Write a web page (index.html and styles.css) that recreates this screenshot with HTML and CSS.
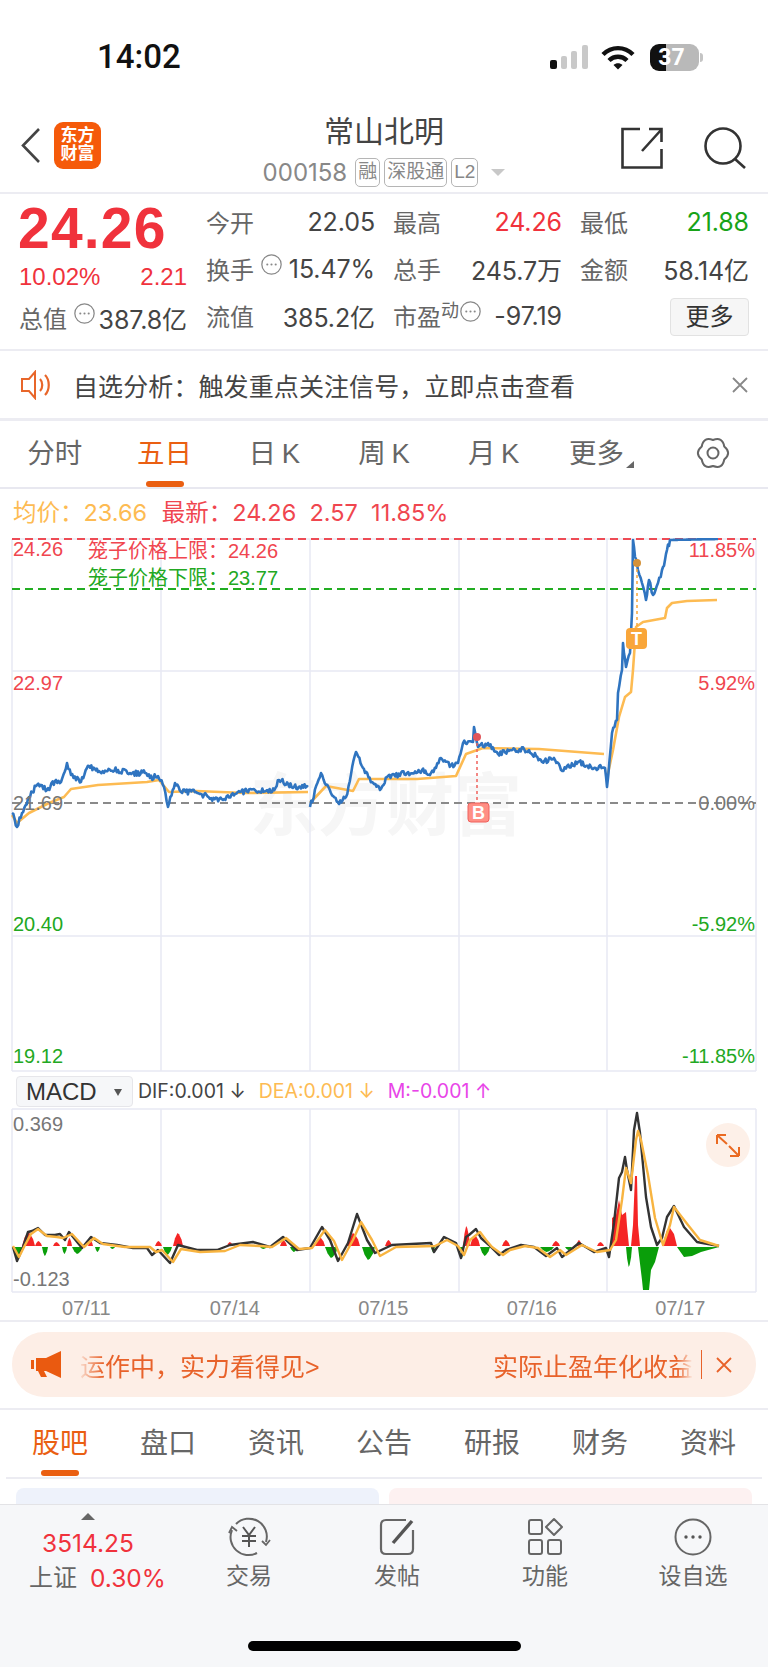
FILE: index.html
```html
<!DOCTYPE html>
<html lang="zh-CN">
<head>
    <meta charset="UTF-8">
    <title>常山北明</title>
    <link rel="stylesheet" href="styles.css">
</head>
<body>
    <div class="status-bar">
        <span class="time">14:02</span>
        <div class="status-icons">
            <svg class="signal" width="40" height="24" viewBox="0 0 40 24">
                <rect x="1" y="15" width="7" height="9" rx="2" fill="#111"/>
                <rect x="12" y="11" width="6" height="13" rx="2" fill="#c9c9c9"/>
                <rect x="22" y="6" width="6" height="18" rx="2" fill="#c9c9c9"/>
                <rect x="33" y="0" width="6" height="24" rx="2" fill="#c9c9c9"/>
            </svg>
            <svg class="wifi" width="34" height="25" viewBox="0 0 34 25">
                <path d="M2 9.5C10.5 1 23.5 1 32 9.5" fill="none" stroke="#111" stroke-width="4.4"/>
                <path d="M8 15.5C13 10.5 21 10.5 26 15.5" fill="none" stroke="#111" stroke-width="4.4"/>
                <path d="M12.5 20 17 24.6 21.5 20C19 17.6 15 17.6 12.5 20Z" fill="#111"/>
            </svg>
            <div class="battery"><span>37</span></div>
            <div class="battery-nub"></div>
        </div>
    </div>

    <div class="nav">
        <div class="nav-left">
            <svg width="20" height="36" viewBox="0 0 20 36"><path d="M18 2 2 18.5 18 35" fill="none" stroke="#444" stroke-width="2.6"/></svg>
            <div class="logo">东方<br>财富</div>
        </div>
        <div class="nav-title">
            <div class="stock-name">常山北明</div>
            <div class="stock-code">
                <span class="code">000158</span>
                <span class="tag">融</span>
                <span class="tag">深股通</span>
                <span class="tag">L2</span>
                <span class="code-caret"></span>
            </div>
        </div>
        <div class="nav-right">
            <svg width="42" height="42" viewBox="0 0 42 42"><path d="M19 2H1.5V40.500H40.500V22M21 24 40 3M28 2H40.500V15" fill="none" stroke="#333" stroke-width="2.6"/></svg>
            <svg width="42" height="42" viewBox="0 0 42 42"><circle cx="19" cy="19" r="17.500" fill="none" stroke="#333" stroke-width="2.6"/><path d="M31 32 41 41" fill="none" stroke="#333" stroke-width="2.6"/></svg>
        </div>
    </div>

    <div class="quote">
        <div class="price-box">
            <div class="price">24.26</div>
            <div class="price-change"><span>10.02%</span><span>2.21</span></div>
            <div class="cell">
                <span class="label">总值</span>
                <svg class="dots" viewBox="0 0 20 20"><use href="#dots-icon"/></svg>
                <span class="value">387.8亿</span>
            </div>
        </div>
        <div class="quote-grid">
            <div class="cell"><span class="label">今开</span><span class="value">22.05</span></div>
            <div class="cell"><span class="label">最高</span><span class="value up">24.26</span></div>
            <div class="cell"><span class="label">最低</span><span class="value down">21.88</span></div>
            <div class="cell">
                <span class="label">换手</span>
                <svg class="dots" viewBox="0 0 20 20"><use href="#dots-icon"/></svg>
                <span class="value">15.47%</span>
            </div>
            <div class="cell"><span class="label">总手</span><span class="value">245.7万</span></div>
            <div class="cell"><span class="label">金额</span><span class="value">58.14亿</span></div>
            <div class="cell"><span class="label">流值</span><span class="value">385.2亿</span></div>
            <div class="cell">
                <span class="label">市盈</span>
                <span class="label-sup">动</span>
                <svg class="dots" viewBox="0 0 20 20"><use href="#dots-icon"/></svg>
                <span class="value">-97.19</span>
            </div>
            <div class="cell cell-end"><button class="more-btn">更多</button></div>
        </div>
    </div>

    <svg class="defs" width="0" height="0">
        <symbol id="dots-icon" viewBox="0 0 20 20">
            <circle cx="10" cy="10" r="9.200" fill="none" stroke="#888" stroke-width="1.200"/>
            <circle cx="6" cy="10" r="1" fill="#888"/><circle cx="10" cy="10" r="1" fill="#888"/><circle cx="14" cy="10" r="1" fill="#888"/>
        </symbol>
    </svg>

    <div class="alert">
        <svg width="34" height="30" viewBox="0 0 34 30">
            <path d="M2 9H9L15 2V28L9 21H2Z" fill="none" stroke="#e8662a" stroke-width="2"/>
            <path d="M20 9C23 12 23 18 20 21M25 5C30 10 30 20 25 25" fill="none" stroke="#e8662a" stroke-width="2.200"/>
        </svg>
        <span class="alert-text">自选分析：触发重点关注信号，立即点击查看</span>
        <svg class="alert-close" width="18" height="18" viewBox="0 0 18 18"><path d="M2 2 16 16M16 2 2 16" stroke="#888" stroke-width="1.800"/></svg>
    </div>

    <div class="period-tabs">
        <div class="period">分时</div>
        <div class="period active">五日</div>
        <div class="period">日 K</div>
        <div class="period">周 K</div>
        <div class="period">月 K</div>
        <div class="period period-more">更多<i class="corner"></i></div>
        <div class="period">
            <svg width="34" height="32" viewBox="0 0 34 32">
                <path d="M28.26 9.5Q36 16 28.26 22.5Q26.5 32.45 17 29Q7.5 32.45 5.74 22.5Q-2 16 5.74 9.5Q7.5-.45 17 3Q26.5-.45 28.26 9.5Z" fill="none" stroke="#666" stroke-width="2"/>
                <circle cx="17" cy="16" r="5.500" fill="none" stroke="#666" stroke-width="2"/>
            </svg>
        </div>
    </div>

    <div class="price-info">
        <span class="avg">均价：23.66</span>
        <span class="latest">最新：24.26&nbsp;&nbsp;2.57&nbsp;&nbsp;11.85%</span>
    </div>

    <svg class="chart" id="priceChart" width="768" height="534" viewBox="0 538 768 534">
        <text class="watermark" x="250" y="830">东方财富</text>
        <g class="grid">
            <path d="M12 539H756M12 671H756M12 936H756M12 1071H756"/>
            <path d="M12 539V1071M161 539V1071M310 539V1071M459 539V1071M607 539V1071M756 539V1071"/>
        </g>
        <path class="dash dash-red" d="M12 539H756"/>
        <path class="dash dash-green" d="M12 589H756"/>
        <path class="dash dash-gray" d="M12 803H756"/>
        <g id="avgLines" class="line-avg"></g>
        <g id="priceLines" class="line-price"></g>
        <path class="marker-line red" d="M477 737V802"/>
        <path class="marker-line orange" d="M637 563V628"/>
        <circle cx="477" cy="737" r="4" fill="#e0555a"/>
        <circle cx="637" cy="563" r="4" fill="#d4923a"/>
        <rect x="468" y="803" width="21" height="19" rx="3" fill="#ff8f85" stroke="#f0615c"/>
        <text class="badge" x="478.500" y="819">B</text>
        <rect x="626" y="628" width="21" height="21" rx="4" fill="#f9a63a"/>
        <text class="badge" x="636.500" y="645">T</text>

        <text class="lbl red" x="13" y="556">24.26</text>
        <text class="lbl-cn red" x="88" y="558">笼子价格上限：24.26</text>
        <text class="lbl-cn green" x="88" y="585">笼子价格下限：23.77</text>
        <text class="lbl red" x="13" y="690">22.97</text>
        <text class="lbl gray" x="13" y="810">21.69</text>
        <text class="lbl green" x="13" y="931">20.40</text>
        <text class="lbl green" x="13" y="1063">19.12</text>
        <text class="lbl end red" x="755" y="557">11.85%</text>
        <text class="lbl end red" x="755" y="690">5.92%</text>
        <text class="lbl end gray" x="755" y="810">0.00%</text>
        <text class="lbl end green" x="755" y="931">-5.92%</text>
        <text class="lbl end green" x="755" y="1063">-11.85%</text>
    </svg>

    <div class="macd-head">
        <div class="macd-select"><span>MACD</span><i class="caret"></i></div>
        <span class="macd-val dif">DIF:0.001 ↓</span>
        <span class="macd-val dea">DEA:0.001 ↓</span>
        <span class="macd-val mm">M:-0.001 ↑</span>
    </div>

    <svg class="chart" id="macdChart" width="768" height="185" viewBox="0 1108 768 185">
        <g class="grid">
            <path d="M12 1109H756M12 1292H756"/>
            <path d="M12 1109V1292M161 1109V1292M310 1109V1292M459 1109V1292M607 1109V1292M756 1109V1292"/>
        </g>
        <g id="macdBars"></g>
        <g id="macdLines"></g>
        <text class="lbl gray" x="13" y="1131">0.369</text>
        <text class="lbl gray" x="13" y="1286">-0.123</text>
        <circle cx="728" cy="1145" r="22" fill="#fdf0e8"/>
        <path class="expand" d="M717 1135V1144M717 1135H726M717 1135 727 1144M739 1156V1147M739 1156H730M739 1156 729 1146"/>
    </svg>

    <div class="dates">
        <span>07/11</span><span>07/14</span><span>07/15</span><span>07/16</span><span>07/17</span>
    </div>

    <div class="banner-wrap">
        <div class="banner">
            <svg width="31" height="27" viewBox="0 0 31 27">
                <path d="M0 9H3V18H0ZM5 7H15L30 0V27L15 20H13L16 26H10L7 20H5Z" fill="#ea5a10"/>
            </svg>
            <div class="marquee">
                <span>运作中，实力看得见&gt;</span>
                <span>实际止盈年化收益</span>
            </div>
            <i class="banner-sep"></i>
            <svg width="16" height="16" viewBox="0 0 16 16"><path d="M1 1 15 15M15 1 1 15" stroke="#e8622a" stroke-width="1.800"/></svg>
        </div>
    </div>

    <div class="info-tabs">
        <div class="info-tab active">股吧</div>
        <div class="info-tab">盘口</div>
        <div class="info-tab">资讯</div>
        <div class="info-tab">公告</div>
        <div class="info-tab">研报</div>
        <div class="info-tab">财务</div>
        <div class="info-tab">资料</div>
    </div>

    <div class="peek-cards">
        <div class="peek blue"></div>
        <div class="peek pink"></div>
    </div>

    <div class="bottom-bar">
        <div class="index">
            <i class="index-arrow"></i>
            <div class="index-value">3514.25</div>
            <div class="index-name"><span>上证</span><span class="index-pct">0.30%</span></div>
        </div>
        <div class="bar-item">
            <svg width="44" height="40" viewBox="0 0 44 40">
                <path d="M9 7A18 18 0 0 1 39 25M5 13A18 18 0 0 0 30 36" fill="none" stroke="#666" stroke-width="2"/>
                <path d="M2 16 5 10 10 14M35 24 39 28 43 23" fill="none" stroke="#666" stroke-width="1.800"/>
                <path d="M16 10 22 18 28 10M22 18V30M15 19H29M15 24H29" fill="none" stroke="#555" stroke-width="2"/>
            </svg>
            <span>交易</span>
        </div>
        <div class="bar-item">
            <svg width="36" height="38" viewBox="0 0 36 38">
                <path d="M27 2H7C4 2 2 4 2 7V31C2 34 4 36 7 36H29C32 36 34 34 34 31V12" fill="none" stroke="#666" stroke-width="2.200"/>
                <path d="M14 25 33 3" fill="none" stroke="#555" stroke-width="3.400"/>
            </svg>
            <span>发帖</span>
        </div>
        <div class="bar-item">
            <svg width="36" height="38" viewBox="0 0 36 38">
                <rect x="2" y="2" width="13" height="14" rx="2" fill="none" stroke="#666" stroke-width="2"/>
                <path d="M27 1 35 9 27 17 19 9Z" fill="none" stroke="#666" stroke-width="2" stroke-linejoin="round"/>
                <rect x="2" y="22" width="13" height="14" rx="2" fill="none" stroke="#666" stroke-width="2"/>
                <rect x="21" y="22" width="13" height="14" rx="2" fill="none" stroke="#666" stroke-width="2"/>
            </svg>
            <span>功能</span>
        </div>
        <div class="bar-item">
            <svg width="38" height="38" viewBox="0 0 38 38">
                <circle cx="19" cy="19" r="17.500" fill="none" stroke="#666" stroke-width="2"/>
                <circle cx="12" cy="19" r="1.700" fill="#555"/><circle cx="19" cy="19" r="1.700" fill="#555"/><circle cx="26" cy="19" r="1.700" fill="#555"/>
            </svg>
            <span>设自选</span>
        </div>
        <div class="home-indicator"></div>
    </div>

    <script src="chart.js"></script>
</body>
</html>
```

FILE: styles.css
```css
:root {
    --up: #f0323c;
    --down: #18a318;
    --orange: #ea5f12;
    --label: #666;
    --value: #444;
    --line: #ececf2;
    --grid: #e7e9f4;
    --num-font: Inter, "Noto Sans CJK SC", sans-serif;
}

* {
    box-sizing: border-box;
}

body {
    margin: 0;
    width: 768px;
    height: 1667px;
    overflow: hidden;
    background-color: #fff;
    font-family: "Liberation Sans", "Noto Sans CJK SC", sans-serif;
    color: var(--value);
}

.defs {
    position: absolute;
}

/* Status bar */
.status-bar {
    height: 108px;
    padding: 38px 65px 0 97px;
    display: flex;
    justify-content: space-between;
    align-items: flex-start;
}

.time {
    font-family: Roboto, "Liberation Sans", sans-serif;
    font-size: 33px;
    font-weight: 500;
    line-height: 38px;
    color: #111;
}

.status-icons {
    display: flex;
    align-items: center;
    height: 38px;
}

.wifi {
    margin-left: 12px;
}

.battery {
    margin-left: 15px;
    width: 49px;
    height: 27px;
    border-radius: 9px;
    background: linear-gradient(90deg, #111 0, #111 16px, #b9b9b9 16px);
    color: #fff;
    font-family: Roboto, sans-serif;
    font-size: 23px;
    font-weight: 700;
    line-height: 27px;
    text-align: center;
}

.battery span {
    margin-left: -6px;
}

.battery-nub {
    width: 3px;
    height: 9px;
    margin-left: 1px;
    border-radius: 0 3px 3px 0;
    background-color: #c4c4c4;
}

/* Nav */
.nav {
    height: 86px;
    display: grid;
    grid-template-columns: 1fr auto 1fr;
    border-bottom: 2px solid var(--line);
}

.nav-left {
    display: flex;
    align-items: center;
    gap: 13px;
    padding: 0 0 10px 21px;
}

.logo {
    width: 47px;
    height: 47px;
    border-radius: 9px;
    background-color: #f55a0a;
    color: #fff;
    font-size: 17px;
    font-weight: 700;
    line-height: 18px;
    text-align: center;
    padding-top: 5px;
}

.nav-title {
    text-align: center;
    padding-top: 7px;
}

.stock-name {
    font-size: 30px;
    line-height: 34px;
    color: #444;
}

.stock-code {
    display: flex;
    align-items: center;
    gap: 4px;
    margin-top: 9px;
    height: 29px;
}

.code {
    font-family: var(--num-font);
    font-size: 24px;
    color: #888;
    margin-right: 4px;
}

.tag {
    height: 29px;
    padding: 0 2px;
    border: 1.500px solid #b5b5b5;
    border-radius: 5px;
    font-size: 19px;
    line-height: 26px;
    color: #888;
}

.code-caret {
    margin-left: 9px;
    border-left: 7px solid transparent;
    border-right: 7px solid transparent;
    border-top: 7px solid #c8c8c8;
}

.nav-right {
    display: flex;
    justify-content: flex-end;
    gap: 41px;
    padding: 19px 22px 0 0;
}

/* Quote */
.quote {
    height: 157px;
    padding-left: 19px;
    display: flex;
    border-bottom: 2px solid var(--line);
}

.price-box {
    width: 168px;
}

.price {
    margin-top: 3px;
    margin-left: -1px;
    font-size: 57px;
    font-weight: 700;
    line-height: 62px;
    letter-spacing: 1.200px;
    color: var(--up);
}

.price-change {
    margin-top: 3px;
    display: flex;
    justify-content: space-between;
    font-size: 24px;
    line-height: 30px;
    color: var(--up);
}

.price-box .cell {
    margin-top: 2px;
    height: 47px;
}

.quote-grid {
    margin-left: 19px;
    padding-top: 4px;
    display: grid;
    grid-template-columns: repeat(3, 169px);
    grid-auto-rows: 47px;
    column-gap: 18px;
}

.cell {
    display: flex;
    align-items: center;
    font-size: 24px;
    white-space: nowrap;
}

.cell-end {
    justify-content: flex-end;
}

.label {
    color: var(--label);
}

.label-sup {
    align-self: flex-start;
    margin-top: 8px;
    font-size: 18px;
    line-height: 22px;
    color: var(--label);
}

.value {
    margin-left: auto;
    font-family: var(--num-font);
    font-size: 25px;
    letter-spacing: -0.100px;
    color: var(--value);
}

.value.up {
    color: var(--up);
}

.value.down {
    color: var(--down);
}

.dots {
    align-self: flex-start;
    width: 21px;
    height: 21px;
    margin: 9px 0 0 7px;
    flex: none;
}

.label-sup + .dots {
    margin-left: 1px;
}

.more-btn {
    width: 79px;
    height: 38px;
    margin-top: 2px;
    border: 1px solid #e2e2e2;
    border-radius: 4px;
    background-color: #f6f6f6;
    font-family: inherit;
    font-size: 24px;
    line-height: 36px;
    padding: 0;
    color: #333;
}

/* Alert */
.alert {
    height: 70px;
    padding: 0 19px 0 20px;
    display: flex;
    align-items: center;
    border-bottom: 3px solid var(--line);
}

.alert-text {
    margin-left: 19px;
    font-size: 25px;
    letter-spacing: 0.100px;
    color: #444;
}

.alert-close {
    margin-left: auto;
}

/* Period tabs */
.period-tabs {
    height: 68px;
    display: grid;
    grid-template-columns: repeat(7, 1fr);
    align-items: center;
    padding-bottom: 2px;
    border-bottom: 2px solid #e8e8f0;
}

.period {
    position: relative;
    font-size: 27.500px;
    line-height: 66px;
    height: 66px;
    color: var(--label);
    text-align: center;
    word-spacing: -2px;
}

.period svg {
    margin-top: 16px;
    display: inline-block;
}

.period.active {
    color: var(--orange);
}

.period.active::after {
    content: "";
    position: absolute;
    left: 36px;
    bottom: 0;
    width: 38px;
    height: 6px;
    border-radius: 3px;
    background-color: var(--orange);
}

.period-more {
    padding-right: 14px;
}

.corner {
    position: absolute;
    right: 24px;
    top: 40px;
    border-left: 8px solid transparent;
    border-bottom: 7px solid #666;
}

.price-info {
    height: 49px;
    padding: 11px 0 0 13px;
    font-family: var(--num-font);
    font-size: 23.500px;
    line-height: 26px;
    white-space: nowrap;
}

.avg {
    color: #fdbb52;
}

.latest {
    margin-left: 8px;
    color: #f0464f;
}

/* Charts */
.chart {
    display: block;
}

.grid path {
    fill: none;
    stroke: var(--grid);
    stroke-width: 1.500;
}

.watermark {
    font-size: 68px;
    font-weight: 700;
    fill: #f6f6f6;
}

.dash {
    fill: none;
    stroke-width: 2;
    stroke-dasharray: 8 5;
}

.dash-red {
    stroke: #ee4b55;
}

.dash-green {
    stroke: #22ad22;
}

.dash-gray {
    stroke: #8a8a8a;
}

.line-price {
    filter: blur(0.300px);
}

.line-price polyline {
    fill: none;
    stroke: #2f74c0;
    stroke-width: 2.600;
    stroke-linejoin: round;
}

.line-avg polyline {
    fill: none;
    stroke: #fdbb52;
    stroke-width: 2.600;
    stroke-linejoin: round;
}

.marker-line {
    fill: none;
    stroke-width: 1.500;
    stroke-dasharray: 3 3;
}

.marker-line.red {
    stroke: #f0615c;
}

.marker-line.orange {
    stroke: #f9a63a;
}

.badge {
    font-size: 18px;
    font-weight: 700;
    fill: #fff;
    text-anchor: middle;
}

.lbl {
    font-size: 20px;
}

.lbl-cn {
    font-size: 20px;
}

.end {
    text-anchor: end;
}

text.red {
    fill: #f0464f;
}

text.green {
    fill: #22a822;
}

text.gray {
    fill: #777;
}

.expand {
    fill: none;
    stroke: #ea6a22;
    stroke-width: 2;
}

.macd-head {
    height: 36px;
    padding: 2px 0 0 16px;
    display: flex;
    align-items: center;
    white-space: nowrap;
}

.macd-select {
    position: relative;
    width: 117px;
    height: 31px;
    padding-left: 9px;
    border: 1px solid #e6e6ea;
    border-radius: 4px;
    background-color: #f6f7f9;
    font-size: 24px;
    line-height: 30px;
    color: #333;
}

.caret {
    position: absolute;
    right: 10px;
    top: 12px;
    border-left: 4.500px solid transparent;
    border-right: 4.500px solid transparent;
    border-top: 7px solid #555;
}

.macd-val {
    font-family: var(--num-font);
    font-size: 19.500px;
}

.dif {
    margin-left: 5px;
    color: #444;
}

.dea {
    margin-left: 13px;
    color: #fdbb52;
}

.mm {
    margin-left: 13px;
    color: #e845e8;
}

.dates {
    height: 29px;
    display: grid;
    grid-template-columns: repeat(5, 148.500px);
    justify-items: center;
    padding-left: 12px;
    font-size: 20px;
    line-height: 30px;
    color: #888;
    border-bottom: 2px solid var(--line);
}

/* Banner */
.banner-wrap {
    height: 88px;
    padding: 10px 12px 0;
    border-bottom: 2px solid var(--line);
}

.banner {
    height: 65px;
    padding: 0 24px 0 19px;
    display: flex;
    align-items: center;
    border-radius: 32px;
    background-color: #fdeee6;
    color: #e8622a;
}

.marquee {
    flex: 1;
    margin-left: 15px;
    padding-left: 3px;
    display: flex;
    justify-content: space-between;
    font-size: 25px;
    white-space: nowrap;
    overflow: hidden;
    -webkit-mask-image: linear-gradient(90deg, transparent 0, #000 26px, #000 calc(100% - 16px), transparent 100%);
    mask-image: linear-gradient(90deg, transparent 0, #000 26px, #000 calc(100% - 16px), transparent 100%);
}

.banner-sep {
    width: 1px;
    height: 29px;
    margin: 0 14px 0 8px;
    background-color: #e8622a;
}

/* Info tabs */
.info-tabs {
    height: 69px;
    margin: 0 6px;
    padding-right: 1px;
    display: grid;
    grid-template-columns: repeat(7, 108px);
    border-bottom: 2px solid var(--line);
}

.info-tab {
    position: relative;
    font-size: 28px;
    line-height: 68px;
    height: 67px;
    text-align: center;
    color: var(--label);
}

.info-tab.active {
    color: var(--orange);
}

.info-tab.active::after {
    content: "";
    position: absolute;
    left: 35px;
    bottom: 1px;
    width: 38px;
    height: 6px;
    border-radius: 3px;
    background-color: var(--orange);
}

.peek-cards {
    height: 25px;
    padding: 9px 16px 0;
    display: grid;
    grid-template-columns: 363px 363px;
    column-gap: 10px;
}

.peek {
    border-radius: 8px 8px 0 0;
}

.peek.blue {
    background-color: #eef2fb;
}

.peek.pink {
    background-color: #fdf1f1;
}

/* Bottom bar */
.bottom-bar {
    position: relative;
    height: 163px;
    padding-left: 1px;
    display: grid;
    grid-template-columns: 174px repeat(4, 148px);
    align-items: start;
    border-top: 1px solid #e3e3e6;
    background-color: #f6f7f9;
}

.index {
    position: relative;
    padding-top: 24px;
}

.index-arrow {
    position: absolute;
    left: 80px;
    top: 8px;
    border-left: 7px solid transparent;
    border-right: 7px solid transparent;
    border-bottom: 7px solid #666;
}

.index-value {
    padding-left: 41px;
    font-family: var(--num-font);
    font-size: 24.500px;
    line-height: 28px;
    color: var(--up);
}

.index-name {
    margin-top: 6px;
    padding-left: 28px;
    display: flex;
    gap: 13px;
    font-size: 24px;
    line-height: 30px;
    color: var(--label);
}

.index-pct {
    font-family: var(--num-font);
    font-size: 24.500px;
    color: var(--up);
}

.bar-item {
    padding-top: 12px;
    display: flex;
    flex-direction: column;
    align-items: center;
    font-size: 23px;
    line-height: 30px;
    color: var(--label);
}

.bar-item svg {
    height: 40px;
    margin-bottom: 4px;
}

.home-indicator {
    position: absolute;
    left: 248px;
    top: 136px;
    width: 273px;
    height: 10px;
    border-radius: 5px;
    background-color: #000;
}
```

FILE: chart.js
```js
// draws the lines of the five day chart and the macd panel
var NS = 'http://www.w3.org/2000/svg';

var pricePts = [
    [[12,813],[17,827],[22,813],[29,797],[37,785],[47,790],[56,780],[61,782],[67,763],[71,775],[81,782],[89,766],[98,772],[118,770],[130,773],[145,773],[150,778],[158,776],[164,787],[168,807],[175,783],[181,792],[196,792],[211,798],[223,800],[240,792],[255,790],[272,792],[279,780],[294,787],[308,787]],
    [[310,807],[321,773],[326,785],[338,802],[346,797],[356,752],[365,773],[380,790],[387,777],[407,773],[422,770],[431,773],[441,758],[451,765],[458,763],[463,743],[473,742],[474,727],[478,747],[488,743],[498,754],[510,750],[529,750],[542,762],[554,758],[561,770],[578,762],[591,767],[605,768],[607,787],[612,733],[617,720],[618,693],[622,670],[623,643],[626,667],[630,653],[632,613],[633,540],[635,557],[638,570],[642,583],[646,600],[649,580],[653,595],[658,583],[662,570],[665,560],[667,550],[670,540],[718,539]]
];

var avgPts = [
    [[12,815],[17,823],[29,813],[49,803],[64,797],[71,789],[98,785],[147,782],[159,780],[169,792],[196,791],[245,793],[308,792]],
    [[310,803],[326,786],[353,791],[359,779],[417,779],[456,776],[466,754],[483,748],[539,749],[604,754]],
    [[607,778],[613,750],[619,717],[625,697],[631,692],[633,670],[636,627],[643,622],[665,618],[667,608],[672,603],[687,601],[717,600]]
];

var difPts = [[13,1247],[17,1261],[23,1247],[28,1232],[32,1231],[38,1228],[45,1235],[55,1235],[60,1234],[65,1240],[69,1232],[82,1248],[91,1237],[100,1243],[117,1245],[133,1248],[147,1248],[152,1255],[158,1250],[170,1263],[178,1245],[197,1250],[217,1250],[230,1245],[253,1242],[270,1247],[283,1237],[297,1250],[310,1248],[322,1227],[330,1240],[338,1261],[348,1243],[357,1214],[367,1240],[375,1253],[392,1245],[431,1243],[434,1252],[444,1237],[456,1243],[461,1258],[466,1237],[469,1235],[476,1229],[481,1238],[489,1245],[499,1255],[506,1250],[521,1245],[534,1247],[546,1256],[557,1248],[562,1257],[579,1243],[594,1252],[606,1248],[609,1257],[614,1223],[619,1178],[622,1172],[625,1157],[627,1170],[631,1190],[634,1130],[637,1113],[640,1133],[646,1197],[651,1227],[657,1245],[662,1238],[667,1217],[674,1206],[684,1227],[697,1242],[719,1246]];

var deaPts = [[13,1246],[19,1257],[25,1245],[31,1234],[38,1229],[47,1236],[57,1237],[63,1238],[72,1234],[84,1247],[94,1238],[103,1244],[125,1247],[150,1247],[156,1252],[162,1250],[173,1262],[181,1249],[200,1252],[225,1251],[240,1245],[260,1246],[272,1247],[286,1238],[299,1249],[312,1248],[325,1230],[334,1241],[342,1260],[353,1240],[361,1222],[372,1240],[380,1256],[396,1247],[435,1246],[447,1240],[458,1246],[464,1255],[470,1240],[480,1232],[486,1240],[492,1247],[503,1255],[510,1250],[525,1246],[538,1248],[550,1257],[560,1250],[566,1255],[582,1245],[597,1252],[610,1250],[616,1240],[622,1200],[626,1168],[631,1183],[636,1140],[638,1131],[641,1140],[648,1175],[655,1218],[663,1245],[670,1225],[674,1207],[688,1225],[700,1240],[719,1246]];

// x0, x1, tip of a histogram bump
var redBars = [[22,35,1232],[35,42,1241],[53,60,1242],[67,72,1238],[88,93,1240],[155,162,1241],[173,183,1233],[227,233,1242],[280,287,1240],[315,325,1237],[347,360,1233],[385,392,1240],[463,470,1226],[470,480,1235],[502,510,1240],[552,560,1241],[576,582,1240],[597,604,1242]];
var greenBars = [[13,22,1260],[42,48,1256],[62,67,1254],[72,83,1254],[95,100,1252],[110,115,1249],[163,172,1255],[260,267,1249],[290,298,1252],[325,338,1258],[362,375,1260],[431,435,1252],[460,464,1258],[480,490,1256],[540,554,1252],[565,572,1250],[626,632,1267]];
var redShapes = [
    '612,1246 612,1218 616,1215 619,1200 622,1215 626,1212 627,1226 629,1246',
    '631,1246 633,1225 635,1176 637,1176 638,1225 640,1246',
    '662,1246 667,1230 670,1228 674,1234 677,1246'
];
var greenShapes = [
    '638,1247 642,1280 643,1290 649,1290 651,1270 655,1262 659,1247',
    '677,1247 684,1257 692,1256 701,1252 719,1247'
];

function addPolyline(parent, pts, attrs) {
    var line = document.createElementNS(NS, 'polyline');
    line.setAttribute('points', pts.map(function (p) { return p[0] + ',' + p[1]; }).join(' '));
    for (var k in attrs) line.setAttribute(k, attrs[k]);
    parent.appendChild(line);
}

function addPolygon(parent, points, fill) {
    var shape = document.createElementNS(NS, 'polygon');
    shape.setAttribute('points', points);
    shape.setAttribute('fill', fill);
    parent.appendChild(shape);
}

// rounded looking bump from the zero line out to the tip
function bump(b, zero) {
    var w = b[1] - b[0], h = zero - b[2];
    return [
        [b[0], zero],
        [b[0] + w * 0.2, zero - h * 0.6],
        [b[0] + w * 0.45, b[2]],
        [b[0] + w * 0.6, b[2] + h * 0.1],
        [b[0] + w * 0.85, zero - h * 0.5],
        [b[1], zero]
    ].map(function (p) { return p[0] + ',' + p[1]; }).join(' ');
}

// fixed seed so every render gives the same wiggle
var seed = 17;
function rand() {
    seed = (seed * 16807) % 2147483647;
    return seed / 2147483647 - 0.5;
}

function wiggle(pts, amount) {
    var out = [];
    for (var i = 0; i < pts.length - 1; i++) {
        var a = pts[i], b = pts[i + 1];
        var steps = Math.max(1, Math.round((b[0] - a[0]) / 1.2));
        var flat = b[1] === 539 || (a[1] === 540 && b[1] === 539);
        for (var s = 0; s < steps; s++) {
            var t = s / steps;
            var j = s === 0 || flat ? 0 : rand() * amount;
            out.push([+(a[0] + (b[0] - a[0]) * t).toFixed(1), +(a[1] + (b[1] - a[1]) * t + j).toFixed(1)]);
        }
    }
    out.push(pts[pts.length - 1]);
    return out;
}

var avgGroup = document.getElementById('avgLines');
avgPts.forEach(function (pts) { addPolyline(avgGroup, pts, {}); });

var priceGroup = document.getElementById('priceLines');
pricePts.forEach(function (pts) { addPolyline(priceGroup, wiggle(pts, 5.5), {}); });

var bars = document.getElementById('macdBars');
redBars.forEach(function (b) { addPolygon(bars, bump(b, 1246), '#f52525'); });
greenBars.forEach(function (b) { addPolygon(bars, bump(b, 1247), '#0a9e0a'); });
redShapes.forEach(function (s) { addPolygon(bars, s, '#f52525'); });
greenShapes.forEach(function (s) { addPolygon(bars, s, '#0a9e0a'); });

var lines = document.getElementById('macdLines');
addPolyline(lines, difPts, { fill: 'none', stroke: '#333', 'stroke-width': 2.4, 'stroke-linejoin': 'round' });
addPolyline(lines, deaPts, { fill: 'none', stroke: '#f8b440', 'stroke-width': 2.4, 'stroke-linejoin': 'round' });
```
